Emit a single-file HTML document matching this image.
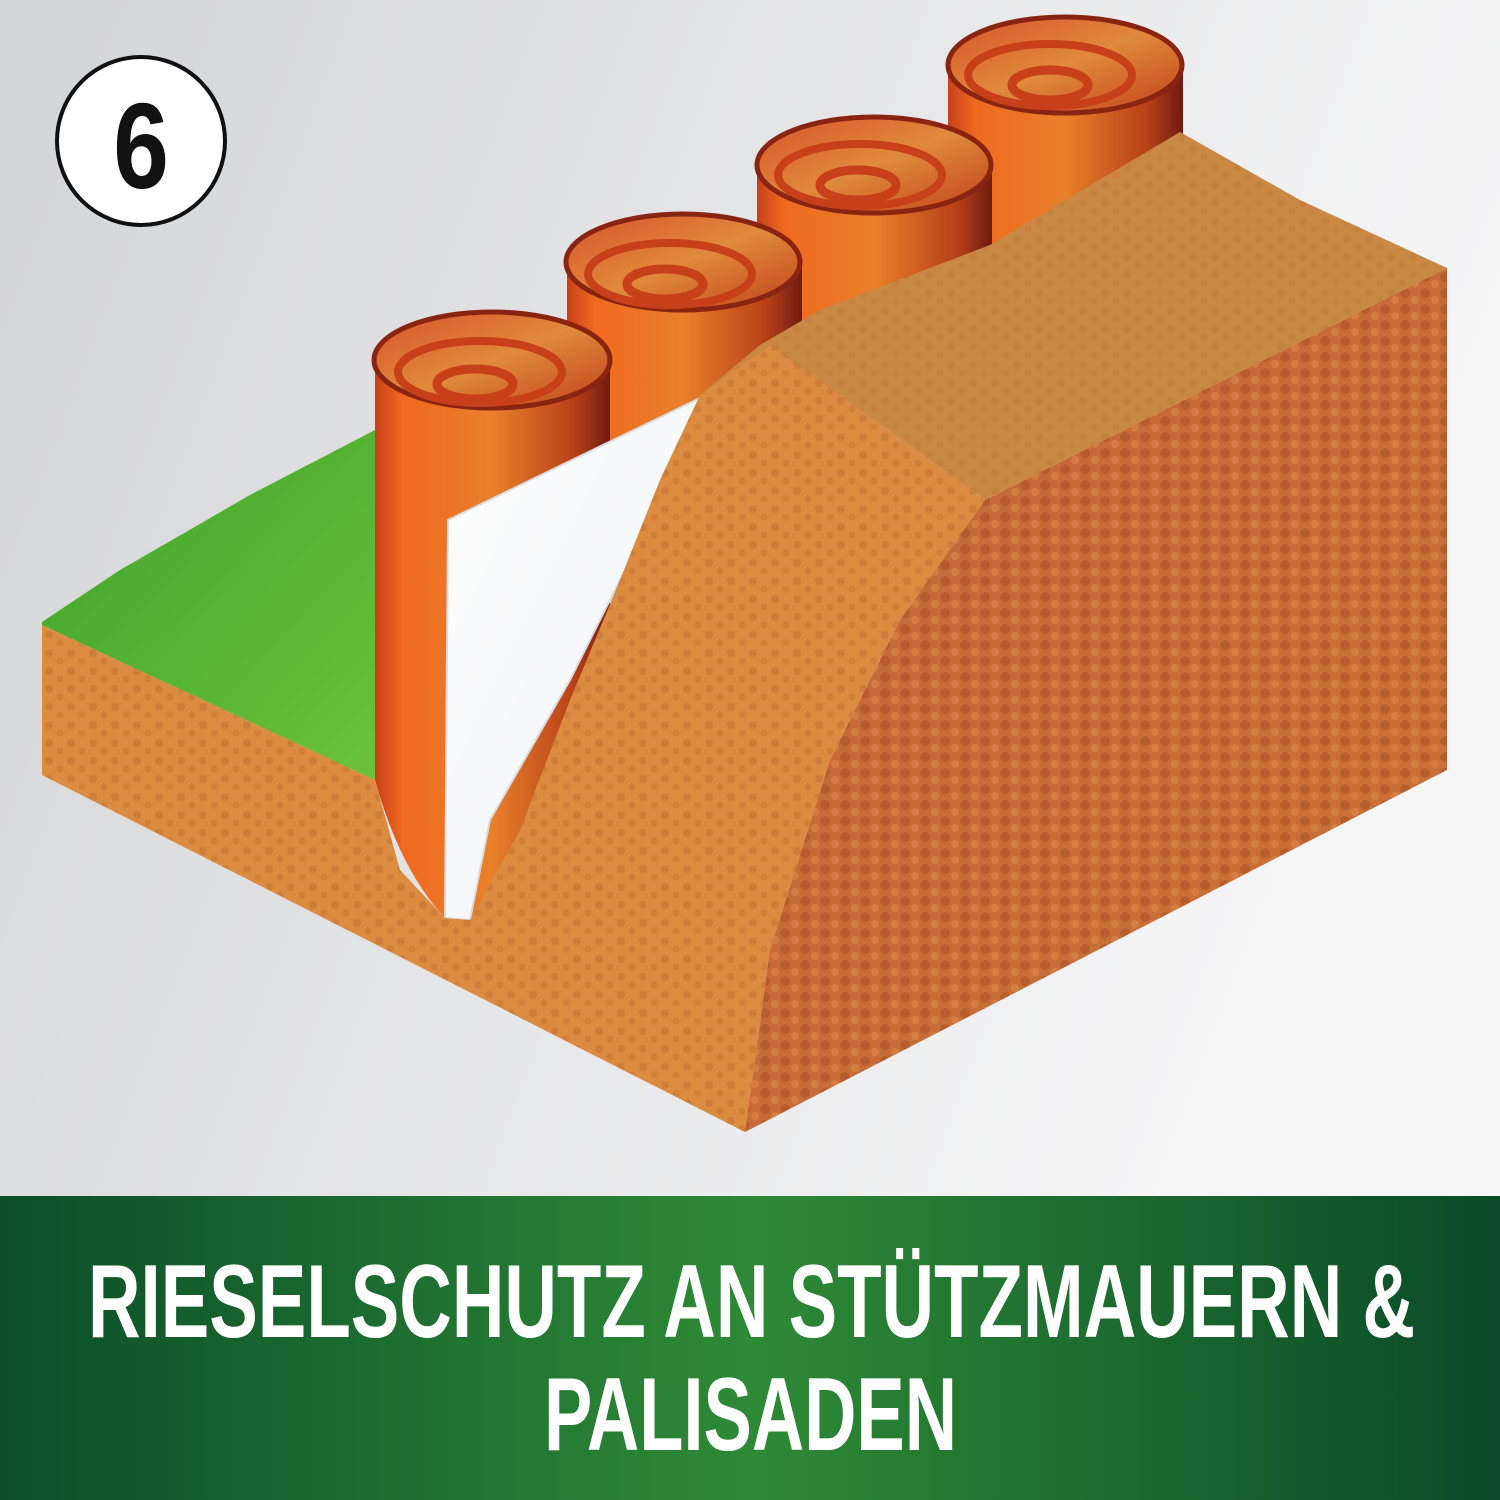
<!DOCTYPE html>
<html><head><meta charset="utf-8"><style>
html,body{margin:0;padding:0;width:1500px;height:1500px;overflow:hidden;}
svg{display:block}
</style></head><body>
<svg width="1500" height="1500" viewBox="0 0 1500 1500" xmlns="http://www.w3.org/2000/svg">
<defs>
<linearGradient id="bg" x1="0" y1="0" x2="1" y2="0.3">
<stop offset="0" stop-color="#d3d4d6"/><stop offset="1" stop-color="#f6f6f7"/></linearGradient>
<linearGradient id="ban" x1="0" y1="0" x2="1" y2="0">
<stop offset="0" stop-color="#0b4e2a"/><stop offset="0.5" stop-color="#2e8a36"/><stop offset="1" stop-color="#0a4a28"/></linearGradient>
<linearGradient id="logb" x1="0" y1="0" x2="1" y2="0">
<stop offset="0" stop-color="#c8401a"/><stop offset="0.12" stop-color="#f06a20"/><stop offset="0.5" stop-color="#e8802a"/><stop offset="0.85" stop-color="#b84018"/><stop offset="1" stop-color="#6e1a10"/></linearGradient>
<linearGradient id="logt" x1="0" y1="0" x2="1" y2="1">
<stop offset="0" stop-color="#d8502a"/><stop offset="0.5" stop-color="#e08a3c"/><stop offset="1" stop-color="#c04018"/></linearGradient>
<linearGradient id="grass" x1="0" y1="0" x2="1" y2="1">
<stop offset="0" stop-color="#3fa32c"/><stop offset="1" stop-color="#6cc23a"/></linearGradient>
<linearGradient id="sheet" x1="0" y1="0" x2="1" y2="1">
<stop offset="0" stop-color="#ffffff"/><stop offset="1" stop-color="#eef0f3"/></linearGradient>
<linearGradient id="right" x1="0" y1="0" x2="1" y2="1">
<stop offset="0" stop-color="#c2663a"/><stop offset="1" stop-color="#cc7236"/></linearGradient>
<pattern id="dots" width="22" height="18" patternUnits="userSpaceOnUse">
<circle cx="5" cy="5" r="4" fill="#b8652a" opacity="0.35"/><circle cx="16" cy="13" r="3.5" fill="#b8652a" opacity="0.3"/></pattern>
<pattern id="dots2" width="20" height="16" patternUnits="userSpaceOnUse">
<circle cx="5" cy="5" r="5" fill="#a34a22" opacity="0.45"/><circle cx="15" cy="12" r="4" fill="#e09050" opacity="0.5"/></pattern>
</defs>
<rect width="1500" height="1196" fill="url(#bg)"/>
<circle cx="141" cy="141" r="84" fill="#fff" stroke="#111" stroke-width="4"/>
<text x="0" y="0" transform="translate(141,188) scale(0.82,1)" text-anchor="middle" font-family="Liberation Sans, sans-serif" font-weight="bold" font-size="122" fill="#111">6</text>

<polygon points="42,622 120,570 250,495 375,430 375,780 42,625" fill="url(#grass)"/>

<g>
<rect x="948" y="65" width="235" height="260" fill="url(#logb)"/>
<ellipse cx="1065" cy="65" rx="117" ry="48" fill="url(#logt)" stroke="#8a2412" stroke-width="5"/>
<ellipse cx="1050" cy="85" rx="38" ry="15" fill="none" stroke="#c8401a" stroke-width="9"/>
<ellipse cx="1050" cy="75" rx="82" ry="31" fill="none" stroke="#c8401a" stroke-width="8"/>
<rect x="757" y="165" width="235" height="260" fill="url(#logb)"/>
<ellipse cx="874" cy="165" rx="117" ry="48" fill="url(#logt)" stroke="#8a2412" stroke-width="5"/>
<ellipse cx="858" cy="185" rx="38" ry="15" fill="none" stroke="#c8401a" stroke-width="9"/>
<ellipse cx="860" cy="175" rx="82" ry="31" fill="none" stroke="#c8401a" stroke-width="8"/>
<rect x="567" y="262" width="235" height="300" fill="url(#logb)"/>
<ellipse cx="683" cy="262" rx="117" ry="48" fill="url(#logt)" stroke="#8a2412" stroke-width="5"/>
<ellipse cx="665" cy="284" rx="38" ry="15" fill="none" stroke="#c8401a" stroke-width="9"/>
<ellipse cx="670" cy="274" rx="82" ry="31" fill="none" stroke="#c8401a" stroke-width="8"/>
<path d="M375,360 L375,780 Q400,870 445,918 L610,918 L610,360 Z" fill="url(#logb)"/>
<ellipse cx="492" cy="360" rx="118" ry="48" fill="url(#logt)" stroke="#8a2412" stroke-width="5"/>
<ellipse cx="475" cy="384" rx="38" ry="15" fill="none" stroke="#c8401a" stroke-width="9"/>
<ellipse cx="480" cy="372" rx="82" ry="31" fill="none" stroke="#c8401a" stroke-width="8"/>
</g>

<polygon points="448,520 700,398 640,540 570,680 490,820 470,920 445,918" fill="url(#sheet)" stroke="#d8dce2" stroke-width="2"/>

<polygon points="700,395 760,345 820,310 990,245 1180,132 1300,200 1447,268 985,500 770,345" fill="#c98944"/>
<polygon points="700,395 760,345 820,310 990,245 1180,132 1300,200 1447,268 985,500 770,345" fill="url(#dots)" opacity="0.6"/>
<polygon points="42,625 375,780 400,870 445,918 470,920 520,830 570,700 620,580 660,480 700,395 770,345 985,500 900,620 830,760 770,950 745,1132 42,775" fill="#dc8c40"/>
<polygon points="42,625 375,780 400,870 445,918 470,920 520,830 570,700 620,580 660,480 700,395 770,345 985,500 900,620 830,760 770,950 745,1132 42,775" fill="url(#dots)"/>
<polygon points="985,500 1447,268 1447,770 745,1132 770,950 830,760 900,620" fill="url(#right)"/>
<polygon points="985,500 1447,268 1447,770 745,1132 770,950 830,760 900,620" fill="url(#dots2)"/>

<rect x="0" y="1196" width="1500" height="304" fill="url(#ban)"/>
<g font-family="Liberation Sans, sans-serif" font-weight="bold" fill="#fff" font-size="104">
<text x="88" y="1337" textLength="1327" lengthAdjust="spacingAndGlyphs">RIESELSCHUTZ AN STÜTZMAUERN &amp;</text>
<text x="544" y="1450" textLength="413" lengthAdjust="spacingAndGlyphs">PALISADEN</text>
</g>
</svg>
</body></html>
